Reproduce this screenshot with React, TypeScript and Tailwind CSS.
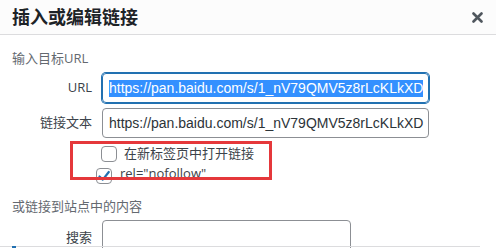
import React from 'react';

const URL_VALUE = 'https://pan.baidu.com/s/1_nV79QMV5z8rLcKLkXD';

function FieldRow({ label, children, className = '' }: { label: string; children: React.ReactNode; className?: string }) {
  return (
    <div className={`flex items-center ${className}`}>
      <span className="w-[90px] pr-[10px] text-right text-[13px] text-[#3c434a]">{label}</span>
      {children}
    </div>
  );
}

const inputFont = { fontFamily: '"Liberation Sans", "Noto Sans CJK SC", sans-serif' };

export default function App() {
  return (
    <div
      className="relative w-[496px] h-[248px] overflow-hidden bg-white text-[#3c434a]"
      style={{ fontFamily: '"Open Sans", "Noto Sans CJK SC", sans-serif' }}
    >
      {/* header */}
      <div className="h-[35px] border-b border-[#dcdcde] flex items-center justify-between pl-[12px] pr-[13px] bg-[#fcfcfc]">
        <h1 className="text-[18px] font-bold text-[#1d2327] leading-none">插入或编辑链接</h1>
        <svg width="11" height="11" viewBox="0 0 11 11" className="text-[#50575e]">
          <path d="M1.5 1.5 L9.5 9.5 M9.5 1.5 L1.5 9.5" stroke="currentColor" strokeWidth="2.6" strokeLinecap="round" />
        </svg>
      </div>

      <div className="pl-[12px]">
        <p className="mt-[13px] text-[13px] leading-[20px] text-[#646970]">输入目标URL</p>

        <FieldRow label="URL" className="mt-[5px]">
          <div
            className="w-[327px] h-[30px] rounded-[4px] border border-[#2271b1] shadow-[0_0_0_1px_#2271b1] flex items-center pl-[6px] overflow-hidden whitespace-nowrap"
            style={inputFont}
          >
            <span className="bg-[#3390ff] text-white text-[14px] leading-[17px]">{URL_VALUE}</span>
          </div>
        </FieldRow>

        <FieldRow label="链接文本" className="mt-[5px]">
          <div
            className="w-[327px] h-[30px] rounded-[4px] border border-[#8c8f94] flex items-center pl-[6px] overflow-hidden whitespace-nowrap text-[14px] text-[#2c3338]"
            style={inputFont}
          >
            {URL_VALUE}
          </div>
        </FieldRow>

        <div className="mt-[8px] ml-[89px] flex items-center h-[16px] gap-[7px]">
          <span className="w-[16px] h-[16px] rounded-[4px] border border-[#8c8f94] bg-white" />
          <span className="text-[13px] text-[#3c434a]">在新标签页中打开链接</span>
        </div>

        <div className="mt-[2px] ml-[84px] flex items-start gap-[8px]">
          <span className="mt-[4px] w-[16px] h-[16px] rounded-[4px] border border-[#8c8f94] bg-white flex items-center justify-center">
            <svg width="14" height="14" viewBox="0 0 14 14">
              <path d="M2.5 7.5 L5.8 10.6 L11.8 3" fill="none" stroke="#2271b1" strokeWidth="2.2" strokeLinecap="round" strokeLinejoin="round" />
            </svg>
          </span>
          <span className="text-[13px] leading-[18px] text-[#3c434a]">rel="nofollow"</span>
        </div>

        <p className="mt-[12px] text-[13px] leading-[20px] text-[#646970]">或链接到站点中的内容</p>

        <FieldRow label="搜索" className="mt-[4px]">
          <div className="w-[249px] h-[36px] rounded-[4px] border border-[#8c8f94] bg-white" />
        </FieldRow>
      </div>

      {/* results list top edge */}
      <div className="absolute left-0 top-[246px] w-[480px] border-t border-[#dcdcde]" />
      <div className="absolute left-[12px] top-[246px] w-[4px] h-[2px] bg-[#2271b1]" />

      {/* annotation */}
      <div className="absolute left-[70px] top-[141px] w-[202px] h-[39px] border-[3px] border-[#e5383b]" />
    </div>
  );
}
